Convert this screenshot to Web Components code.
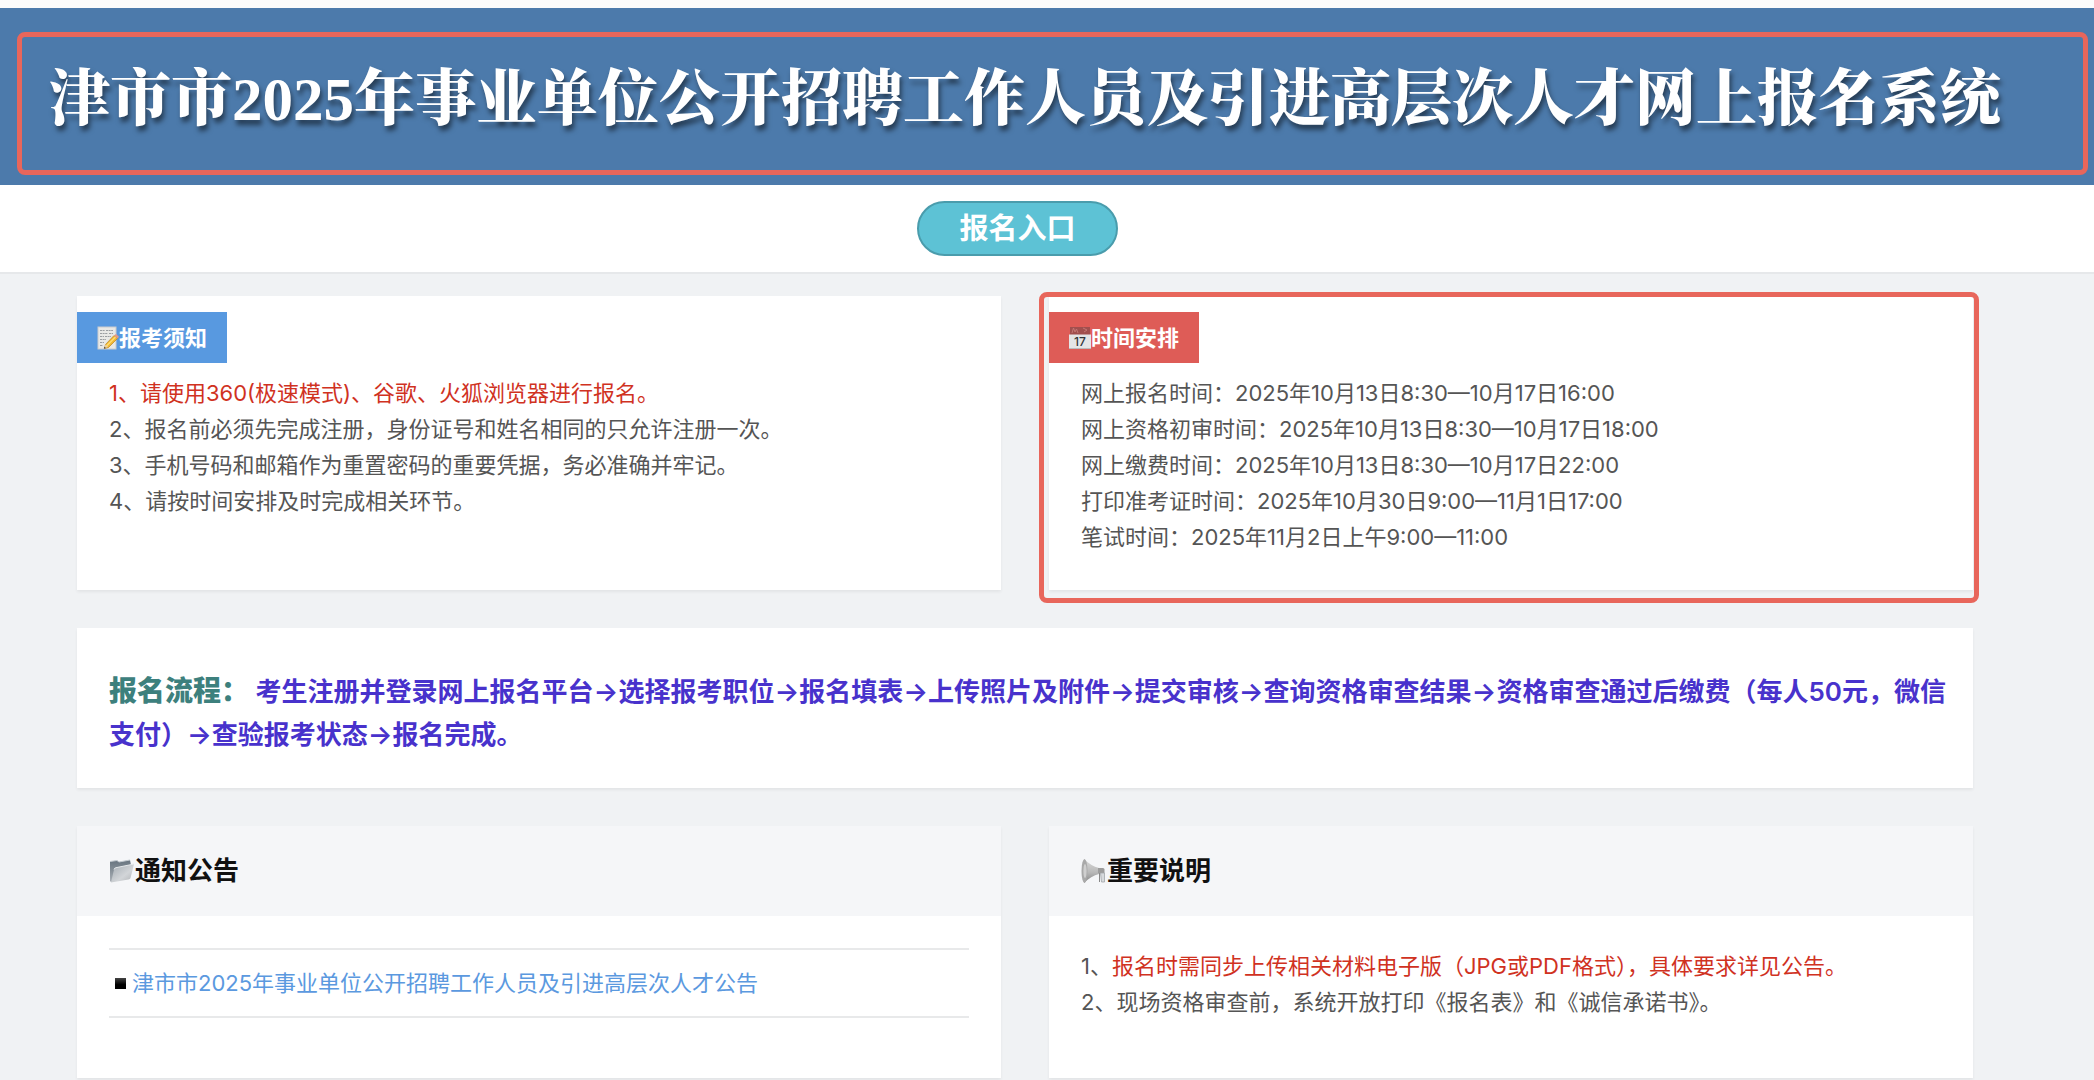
<!DOCTYPE html>
<html lang="zh-CN">
<head>
<meta charset="utf-8">
<title>网上报名系统</title>
<style>
  :root {
    --band: #4c7aab;
    --mark: #e8665b;
    --page: #f0f2f4;
    --text: #555;
    --alert: #d0321f;
    --serif: "Liberation Serif", "Noto Serif CJK SC", "Noto Sans CJK SC", serif;
    --sans: Inter, "Noto Sans CJK SC", sans-serif;
  }
  body { margin: 0; background: var(--page); color: var(--text); font: 22px/36px var(--sans); }
</style>
</head>
<body>
<signup-page></signup-page>

<script>
const define = (name, markup) => customElements.define(name, class extends HTMLElement {
  constructor() {
    super();
    const t = document.createElement('template');
    t.innerHTML = markup;
    this.attachShadow({ mode: 'open' }).append(t.content.cloneNode(true));
  }
});

/* Rounded outline laid over the block that contains it */
define('highlight-frame', `
  <style>
    :host { position: absolute; inset: var(--frame-inset, 0); border: 5px solid var(--mark); border-radius: 8px; pointer-events: none; box-sizing: border-box; }
  </style>`);

define('site-banner', `
  <style>
    :host { display: block; position: relative; background: var(--band); border-top: 8px solid #fbfbfb; --frame-inset: 24px 6px 10px 17px; }
    h1 { margin: 0; padding: 52px 44px 45px 0; text-align: center; font: 900 61px/80px var(--serif); color: #fff; text-shadow: 2px 5px 5px rgba(0,0,0,.5); white-space: nowrap; }
  </style>
  <h1><slot></slot></h1>
  <highlight-frame></highlight-frame>`);

define('entry-bar', `
  <style>
    :host { display: flex; justify-content: center; padding: 16px 59px 16px 0; background: #fff; border-bottom: 2px solid #e6e8ea; }
    button { height: 55px; padding: 0 40px; border: 2px solid #4a9cac; border-radius: 28px; background: #5dc2d5; color: #fff; font: 700 29px/40px var(--sans); cursor: pointer; }
  </style>
  <button type="button"><slot></slot></button>`);

define('info-card', `
  <style>
    :host { display: flow-root; position: relative; background: #fff; box-shadow: 0 2px 3px rgba(0,0,0,.06); --frame-inset: -4px -6px -13px -10px; }
    h2 { display: inline-flex; align-items: center; margin: 16px 0 0; padding: 0 20px; height: 51px; background: var(--tag); color: #fff; font: 700 22px/32px var(--sans); vertical-align: top; }
    .body { padding: 12px 32px 35px; }
  </style>
  <h2><slot name="icon"></slot><slot name="title"></slot></h2>
  <div class="body"><slot></slot></div>
  <slot name="frame"></slot>`);

define('flow-card', `
  <style>
    :host { display: block; background: #fff; padding: 42px 12px 32px 32px; box-shadow: 0 2px 3px rgba(0,0,0,.06); }
    p { margin: 0; font: 600 26px/43px var(--sans); color: #4832cc; }
    strong { font-size: 28px; color: #3d807d; }
  </style>
  <p><strong><slot name="label"></slot></strong> <slot></slot></p>`);

define('panel-card', `
  <style>
    :host { display: block; background: #fff; box-shadow: 0 2px 3px rgba(0,0,0,.06); }
    h2 { display: flex; align-items: center; margin: 0; height: 90px; padding: 0 32px; background: #f5f6f8; color: #111; font: 700 26px/40px var(--sans); }
    .body { padding: 32px 32px 58px; }
  </style>
  <h2><slot name="icon"></slot><slot name="title"></slot></h2>
  <div class="body"><slot></slot></div>`);

define('notice-link', `
  <style>
    :host { display: flex; align-items: center; gap: 6px; padding: 15px 6px; border: solid #e8e9ea; border-width: 2px 0; }
    i { width: 11px; height: 11px; background: linear-gradient(#444, #000 60%); }
    a { color: #5b99df; text-decoration: none; }
  </style>
  <i></i><a href="#notice"><slot></slot></a>`);

define('memo-icon', `
  <style>:host { display: block; } svg { display: block; }</style>
  <svg width="22" height="24" viewBox="0 0 22 24">
    <rect x="1" y="1" width="18" height="22" fill="#e9e9e6" stroke="#c9ccce"/>
    <path d="M3 4.500h5m1 0h7M3 7.500h8m1 0h4M3 10.500h4m1 0h6M3 13.500h6M3 16.500h4M3 19.500h3" stroke="#9b9ea1" stroke-dasharray="2 .6"/>
    <path d="M17 9.500l3.500 3-9 9-4 1 1-4z" fill="#f2b932" stroke="#b98423" stroke-width=".7"/>
    <path d="M18.500 11l-9 9" stroke="#ffdf76" stroke-width="1.300"/>
    <path d="M17 9.500l2-1.500 3 2.800-1.500 1.700z" fill="#e39a87"/>
    <path d="M8.500 18.500l2.500 2.300-4 1.900z" fill="#ecd1a0"/><path d="M7.500 20.800l1.300 1.200-2 .8z" fill="#333"/>
  </svg>`);

define('calendar-icon', `
  <style>:host { display: block; } svg { display: block; } text { font: 500 12px Inter, sans-serif; }</style>
  <svg width="22" height="24" viewBox="0 0 22 24">
    <path d="M1 1h20v9H1z" fill="#a14f4e"/>
    <path d="M3 7l1.500-5L6 6l1.500-3L9 7M14 2l4 2-3 2" fill="none" stroke="#c47774"/>
    <path d="M0 8.500h22V23H0z" fill="#e4e5e6"/><path d="M0 22h22v1H0z" fill="#b9bbbd"/>
    <text x="11" y="20" text-anchor="middle" fill="#303438">17</text>
  </svg>`);

define('folder-icon', `
  <style>:host { display: block; } svg { display: block; }</style>
  <svg width="26" height="26" viewBox="0 0 26 26">
    <defs>
      <linearGradient id="b" x2="0" y2="1"><stop stop-color="#66737e"/><stop offset="1" stop-color="#aab0b6"/></linearGradient>
      <linearGradient id="f" x2="1" y2="1"><stop stop-color="#a3abb2"/><stop offset=".6" stop-color="#d2d5d8"/><stop offset="1" stop-color="#aeb1b4"/></linearGradient>
    </defs>
    <path d="M1 3.500l7-1 2 1.500 11-2 1 5v10L2 24 1 23z" fill="url(#b)"/>
    <path d="M1 3.500l7-1 2 1.500 11-2" fill="none" stroke="#c3cad0"/>
    <path d="M5 11.500q.3-1.500 2-1.800L25 6l-3.500 14q-.4 1.300-2 1.600L2 24.500z" fill="url(#f)"/>
    <path d="M5 11.500q.3-1.500 2-1.800L25 6" fill="none" stroke="#e5e8ea"/>
  </svg>`);

define('speaker-icon', `
  <style>:host { display: block; } svg { display: block; }</style>
  <svg width="26" height="26" viewBox="0 0 26 26">
    <defs><linearGradient id="c" x2="0" y2="1"><stop stop-color="#d9d9d9"/><stop offset=".55" stop-color="#b9b9b9"/><stop offset="1" stop-color="#858585"/></linearGradient></defs>
    <path d="M3 1q7 7 15 9v6Q10 18 3 25z" fill="url(#c)"/>
    <ellipse cx="3.500" cy="13" rx="3" ry="12" fill="#a9a9a9"/><ellipse cx="4" cy="13" rx="1.600" ry="7" fill="#cfcfcf"/>
    <path d="M17 10h5q1.500 0 1.500 1.500V15H17z" fill="#9c9c9c"/>
    <path d="M19.500 15h4v9h-3z" fill="#d7dadd" stroke="#a1a6aa" stroke-width=".8"/>
    <path d="M18.500 15v9" stroke="#888"/>
  </svg>`);

define('signup-page', `
  <style>
    :host { display: block; overflow-x: hidden; }
    main { display: grid; grid-template-columns: 1fr 1fr; gap: 38px 48px; padding: 22px 121px 4px 77px; }
    flow-card { grid-column: 1 / -1; }
    .alert { color: var(--alert); }
    p { margin: 0; }
  </style>
  <site-banner>津市市2025年事业单位公开招聘工作人员及引进高层次人才网上报名系统</site-banner>
  <entry-bar>报名入口</entry-bar>
  <main>
    <info-card style="--tag:#5899e0">
      <memo-icon slot="icon"></memo-icon><span slot="title">报考须知</span>
      <p class="alert">1、请使用360(极速模式)、谷歌、火狐浏览器进行报名。</p>
      <p>2、报名前必须先完成注册，身份证号和姓名相同的只允许注册一次。</p>
      <p>3、手机号码和邮箱作为重置密码的重要凭据，务必准确并牢记。</p>
      <p>4、请按时间安排及时完成相关环节。</p>
    </info-card>
    <info-card style="--tag:#de5c57">
      <calendar-icon slot="icon"></calendar-icon><span slot="title">时间安排</span>
      <p>网上报名时间：2025年10月13日8:30—10月17日16:00</p>
      <p>网上资格初审时间：2025年10月13日8:30—10月17日18:00</p>
      <p>网上缴费时间：2025年10月13日8:30—10月17日22:00</p>
      <p>打印准考证时间：2025年10月30日9:00—11月1日17:00</p>
      <p>笔试时间：2025年11月2日上午9:00—11:00</p>
      <highlight-frame slot="frame"></highlight-frame>
    </info-card>
    <flow-card><span slot="label">报名流程：</span>考生注册并登录网上报名平台→选择报考职位→报名填表→上传照片及附件→提交审核→查询资格审查结果→资格审查通过后缴费（每人50元，微信支付）→查验报考状态→报名完成。</flow-card>
    <panel-card>
      <folder-icon slot="icon"></folder-icon><span slot="title">通知公告</span>
      <notice-link>津市市2025年事业单位公开招聘工作人员及引进高层次人才公告</notice-link>
    </panel-card>
    <panel-card>
      <speaker-icon slot="icon"></speaker-icon><span slot="title">重要说明</span>
      <p>1、<span class="alert">报名时需同步上传相关材料电子版（JPG或PDF格式），具体要求详见公告。</span></p>
      <p>2、现场资格审查前，系统开放打印《报名表》和《诚信承诺书》。</p>
    </panel-card>
  </main>`);
</script>
</body>
</html>
